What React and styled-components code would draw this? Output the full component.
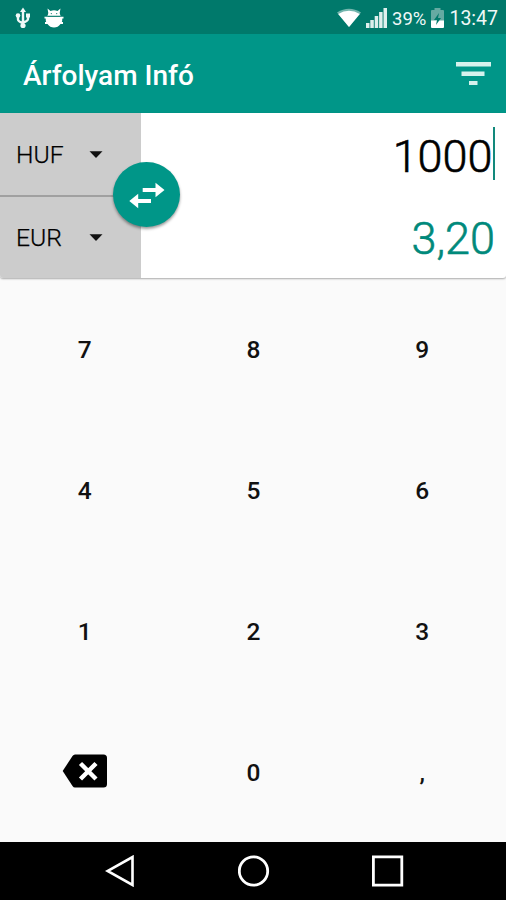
import React from 'react';
import styled, { createGlobalStyle } from 'styled-components';

const GlobalStyle = createGlobalStyle`
  * { box-sizing: border-box; }
  body { margin: 0; background: #fafafa; font-family: Roboto, "Liberation Sans", sans-serif; }
  button { border: 0; padding: 0; background: none; font: inherit; color: inherit; }
  svg { display: block; flex: none; }
`;

const Screen = styled.div`
  width: 506px;
  height: 900px;
  display: flex;
  flex-direction: column;
  background: #fafafa;
  overflow: hidden;
`;

const StatusBar = styled.header`
  height: 34px;
  flex: none;
  display: flex;
  align-items: center;
  padding: 2px 8px 0 15px;
  background: #00796b;
  color: #f0f8f7;
`;

const StatusGroup = styled.div`
  display: flex;
  align-items: center;
  gap: ${(p) => p.$gap}px;
  margin-left: ${(p) => (p.$end ? 'auto' : 0)};
`;

const StatusText = styled.span`
  font-size: ${(p) => p.$size}px;
  line-height: 24px;
  padding-top: 2px;
`;

const Toolbar = styled.div`
  height: 79px;
  flex: none;
  display: flex;
  align-items: center;
  justify-content: space-between;
  padding: 0 15px 0 23px;
  background: #009688;
`;

const Title = styled.h1`
  margin: 4px 0 0;
  font-size: 28px;
  line-height: 36px;
  font-weight: 500;
  color: #fff;
`;

const Converter = styled.section`
  position: relative;
  height: 165px;
  flex: none;
  display: flex;
  background: #fff;
  border-radius: 0 0 3px 3px;
  box-shadow: 0 1px 2px rgba(0, 0, 0, 0.32);
`;

const Currencies = styled.div`
  width: 141px;
  display: flex;
  flex-direction: column;
  background: #ccc;
  border-radius: 0 0 0 3px;
`;

const Currency = styled.button`
  height: 82px;
  display: flex;
  align-items: center;
  justify-content: space-between;
  padding: 2px 38px 0 16px;
  font-size: 24.7px;
  font-weight: 300;
  -webkit-text-stroke: 0.25px currentColor;
  color: #000;

  & + & { height: 83px; border-top: 2px solid #a0a0a0; padding-top: 1px; }
`;

const Code = styled.span`
  line-height: 30px;
`;

const Amounts = styled.div`
  flex: 1;
  display: flex;
  flex-direction: column;
  padding: 14px 11px 0 0;
`;

const Amount = styled.div`
  height: 53px;
  margin-bottom: 29px;
  display: flex;
  justify-content: flex-end;
  align-items: center;
  font-size: 45px;
  font-weight: 300;
  -webkit-text-stroke: 0.6px currentColor;
  line-height: 53px;
  color: ${(p) => (p.$result ? '#00897b' : '#000')};
`;

const Value = styled.span`
  padding-top: 6px;
`;

const Caret = styled.span`
  width: 2.5px;
  height: 53px;
  background: #12897c;
`;

const SwapButton = styled.button`
  position: absolute;
  left: 113px;
  top: 49px;
  width: 67px;
  height: 65px;
  border-radius: 50%;
  background: #009688;
  box-shadow: 0 2px 3px rgba(0, 0, 0, 0.4);
`;

const Keypad = styled.main`
  flex: 1;
  display: grid;
  grid-template-columns: repeat(3, 1fr);
  grid-template-rows: repeat(4, 141px);
`;

const Key = styled.button`
  display: flex;
  align-items: center;
  justify-content: center;
  padding: ${(p) => (p.$icon ? '0 0 1px 2px' : '2px 0 0 1px')};
  font-size: 24.5px;
  font-weight: 500;
  color: #111;
`;

const NavBar = styled.nav`
  height: 58px;
  flex: none;
  display: flex;
  align-items: center;
  justify-content: space-between;
  padding: 0 102px 0 105px;
  background: #000;
`;

const UsbIcon = () => (
  <svg width="16" height="22" viewBox="0 0 16 22" fill="none" stroke="currentColor" strokeWidth="2.400">
    <path d="M8 4v14M3 8v4.500q0 2 5 3.500M13 8v4q0 2-5 3.500" />
    <path d="M8 .5l3 4.500H5z" fill="currentColor" stroke="none" />
    <circle cx="8" cy="18.500" r="2.600" fill="currentColor" stroke="none" />
    <circle cx="3" cy="8.500" r="2.300" fill="currentColor" stroke="none" />
    <path d="M11 6.500h4v4h-4z" fill="currentColor" stroke="none" />
  </svg>
);

const DebugIcon = () => (
  <svg width="20" height="20" viewBox="0 0 20 20" fill="#fff">
    <path d="M3.500.5l3 2.400Q10 1.700 13.500 2.900l3-2.400-.8 4.500.8 3h-13l.8-3z" />
    <path d="M.5 8.700h19v1.800H18.300q0 2.500-.5 3.500H19v2h-2.500Q14 19.500 10 19.500T3.500 16H1v-2h1.200q-.5-1-.5-3.500H.5z" />
    <path d="M4 8.200h12" stroke="#00796b" strokeWidth=".8" />
    <circle cx="7.300" cy="5.600" r=".6" fill="#00796b" />
    <circle cx="12.700" cy="5.600" r=".6" fill="#00796b" />
  </svg>
);

const WifiIcon = () => (
  <svg width="24" height="20" viewBox="0 0 24 20">
    <path d="M0 4.500Q12-3 24 4.500L12 19z" fill="#73b5ad" />
    <path d="M1.200 6Q12-.5 22.800 6L12 19z" fill="#fff" />
  </svg>
);

const SignalIcon = () => (
  <svg width="21" height="20" viewBox="0 0 21 20" fill="#deefed">
    <path d="M0 15h3.500v5H0zM4.300 12h3.500v8H4.300zM8.700 8h3.500v12H8.700zM13.100 4h3.500v16h-3.500zM17.500 0H21v20h-3.500z" />
  </svg>
);

const BatteryIcon = () => (
  <svg width="13" height="20" viewBox="0 0 13 20">
    <path d="M3.500 0h6v2H12q1 0 1 1v10H0V3q0-1 1-1h2.500z" fill="#65aaa2" />
    <path d="M0 12.500h13V19q0 1-1 1H1q-1 0-1-1z" fill="#fff" />
    <path d="M8 5l-5 7h3l-1 5 5-7H7z" fill="#00796b" />
  </svg>
);

const FilterIcon = () => (
  <svg width="35" height="24" viewBox="0 0 35 24" fill="#d5f2ed">
    <path d="M0 0h35v4.500H0zM5.500 9.500h23v4.500h-23zM13 19h8.500v4H13z" />
  </svg>
);

const DropIcon = () => (
  <svg width="14" height="8" viewBox="0 0 14 8">
    <path d="M.5 .3h13L7 7z" fill="#111" />
  </svg>
);

const SwapIcon = () => (
  <svg width="67" height="65" viewBox="0 0 67 65" fill="#fff">
    <path d="M29.700 26.100h12.800v-5.300l9 7.200-9 7.200v-5.200H29.700z" />
    <path d="M38 37.100H25.200v-5.300L16.300 39l8.900 7.200V41H38z" />
  </svg>
);

const BackspaceIcon = () => (
  <svg width="46" height="34" viewBox="0 0 46 34">
    <path d="M13 .5h28.500Q45 .5 45 4v26q0 3.500-3.500 3.500H13q-1.500 0-2.500-1.500L.7 17 10.500 2Q11.500.5 13 .5z" fill="#000" />
    <path d="M18.500 9.500l15.500 15.500M34 9.500L18.500 25" stroke="#fff" strokeWidth="4.400" />
  </svg>
);

const KEYS = ['7', '8', '9', '4', '5', '6', '1', '2', '3', 'back', '0', ','];

export default function App() {
  return (
    <>
      <GlobalStyle />
      <Screen>
        <StatusBar>
          <StatusGroup $gap={13}>
            <UsbIcon />
            <DebugIcon />
          </StatusGroup>
          <StatusGroup $gap={5} $end>
            <WifiIcon />
            <SignalIcon />
            <StatusText $size={18.5}>39%</StatusText>
            <BatteryIcon />
            <StatusText $size={19.5}>13:47</StatusText>
          </StatusGroup>
        </StatusBar>
        <Toolbar>
          <Title>Árfolyam Infó</Title>
          <FilterIcon />
        </Toolbar>
        <Converter>
          <Currencies>
            <Currency><Code>HUF</Code><DropIcon /></Currency>
            <Currency><Code>EUR</Code><DropIcon /></Currency>
          </Currencies>
          <Amounts>
            <Amount><Value>1000</Value><Caret /></Amount>
            <Amount $result><Value>3,20</Value></Amount>
          </Amounts>
          <SwapButton aria-label="Csere"><SwapIcon /></SwapButton>
        </Converter>
        <Keypad>
          {KEYS.map((k) => (
            <Key key={k} $icon={k === 'back'}>{k === 'back' ? <BackspaceIcon /> : k}</Key>
          ))}
        </Keypad>
        <NavBar>
          <svg width="30" height="32" viewBox="0 0 30 32" fill="none" stroke="#fff" strokeWidth="2.600">
            <path d="M27.500 2v28L2.500 16z" />
          </svg>
          <svg width="32" height="32" viewBox="0 0 32 32" fill="none" stroke="#fff" strokeWidth="2.800">
            <circle cx="15.500" cy="16" r="14.200" />
          </svg>
          <svg width="32" height="32" viewBox="0 0 32 32" fill="none" stroke="#fff" strokeWidth="2.800">
            <path d="M1.400 1.800h28.400v28.400H1.400z" />
          </svg>
        </NavBar>
      </Screen>
    </>
  );
}
